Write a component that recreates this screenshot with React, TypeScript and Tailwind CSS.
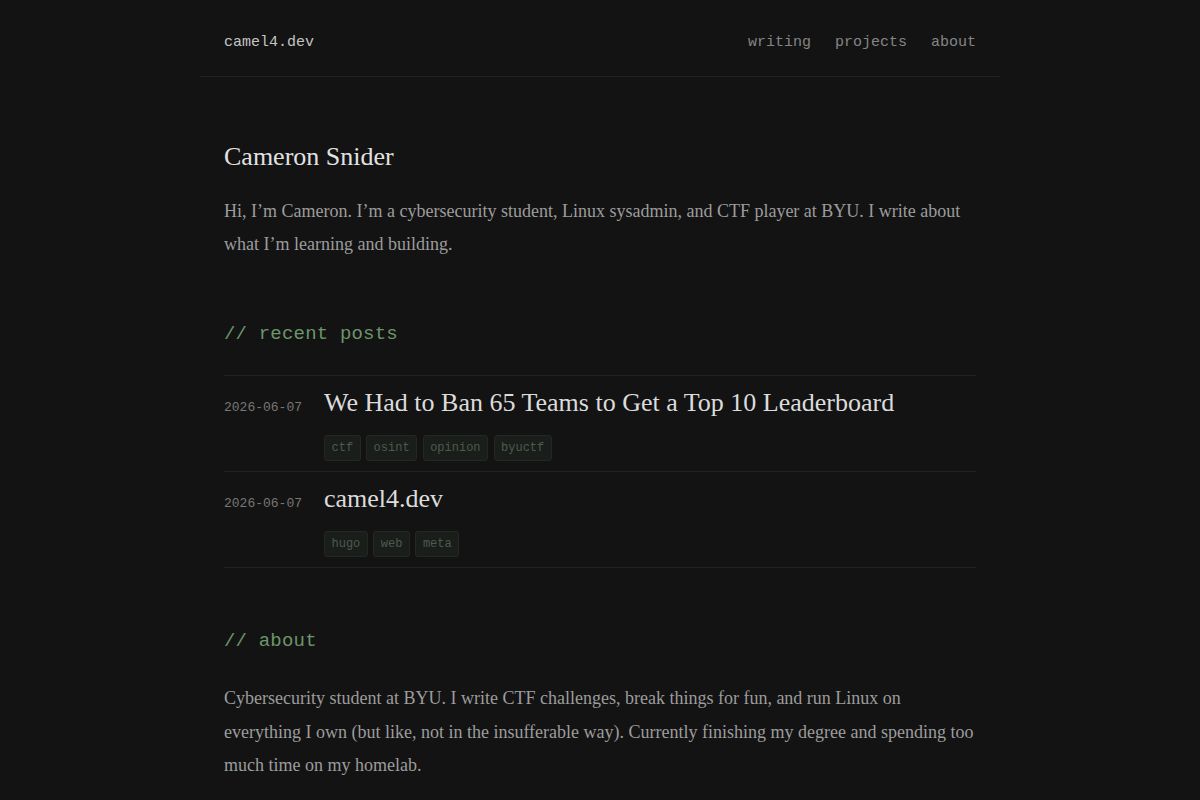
const MONO = 'font-["Liberation_Mono",monospace]'
const SERIF = 'font-["Liberation_Serif",serif]'

interface Post {
  date: string
  title: string
  tags: string[]
}

const POSTS: Post[] = [
  {
    date: '2026-06-07',
    title: 'We Had to Ban 65 Teams to Get a Top 10 Leaderboard',
    tags: ['ctf', 'osint', 'opinion', 'byuctf'],
  },
  { date: '2026-06-07', title: 'camel4.dev', tags: ['hugo', 'web', 'meta'] },
]

function SectionTitle({ children }: { children: string }) {
  return (
    <h2 className={`${MONO} text-[19px] leading-[28px] tracking-[0.01em] text-[#6a966a]`}>
      // {children}
    </h2>
  )
}

function PostRow({ date, title, tags }: Post) {
  return (
    <li className="flex items-baseline border-b border-[#222222] pt-[11px] pb-[10px]">
      <span className={`${MONO} w-[100px] shrink-0 text-[13px] text-[#777777]`}>{date}</span>
      <div className="flex-1">
        <a href="#" className={`${SERIF} block text-[26px] leading-[32px] text-[#dcdcdc]`}>
          {title}
        </a>
        <div className="mt-[16px] flex gap-[5.5px]">
          {tags.map((tag) => (
            <span
              key={tag}
              className={`${MONO} h-[26px] rounded-[3px] border border-[#232823] bg-[#1a1e1a] px-[6.5px] text-[12px] leading-[24px] text-[#4f594f]`}
            >
              {tag}
            </span>
          ))}
        </div>
      </div>
    </li>
  )
}

export default function App() {
  return (
    <div className="min-h-[800px] bg-[#131313]">
      <div className="mx-auto w-[800px]">
        {/* Header */}
        <header className="flex h-[77px] items-center justify-between border-b border-[#202020] px-6 pt-[11px]">
          <a href="#" className={`${MONO} text-[15px] text-[#c4c4c4]`}>camel4.dev</a>
          <nav className={`${MONO} flex gap-6 text-[15px] text-[#858585]`}>
            <a href="#">writing</a>
            <a href="#">projects</a>
            <a href="#">about</a>
          </nav>
        </header>

        <main className="px-6 pt-[63px] pb-10">
          <h1 className={`${SERIF} text-[26px] leading-[34px] text-[#e2e2e2]`}>Cameron Snider</h1>
          <p className={`${SERIF} mt-[21px] text-[18px] leading-[33px] text-[#9c9c9c]`}>
            Hi, I’m Cameron. I’m a cybersecurity student, Linux sysadmin, and CTF player at BYU. I write about
            what I’m learning and building.
          </p>

          {/* Recent posts */}
          <section className="mt-[59px]">
            <SectionTitle>recent posts</SectionTitle>
            <ul className="mt-[27px] border-t border-[#222222]">
              {POSTS.map((post) => (
                <PostRow key={post.title} {...post} />
              ))}
            </ul>
          </section>

          {/* About */}
          <section className="mt-[59px]">
            <SectionTitle>about</SectionTitle>
            <p className={`${SERIF} mt-[27px] text-[18px] leading-[33.5px] text-[#9c9c9c]`}>
              Cybersecurity student at BYU. I write CTF challenges, break things for fun, and run Linux on
              everything I own (but like, not in the insufferable way). Currently finishing my degree and spending too
              much time on my homelab.
            </p>
          </section>
        </main>
      </div>
    </div>
  )
}
